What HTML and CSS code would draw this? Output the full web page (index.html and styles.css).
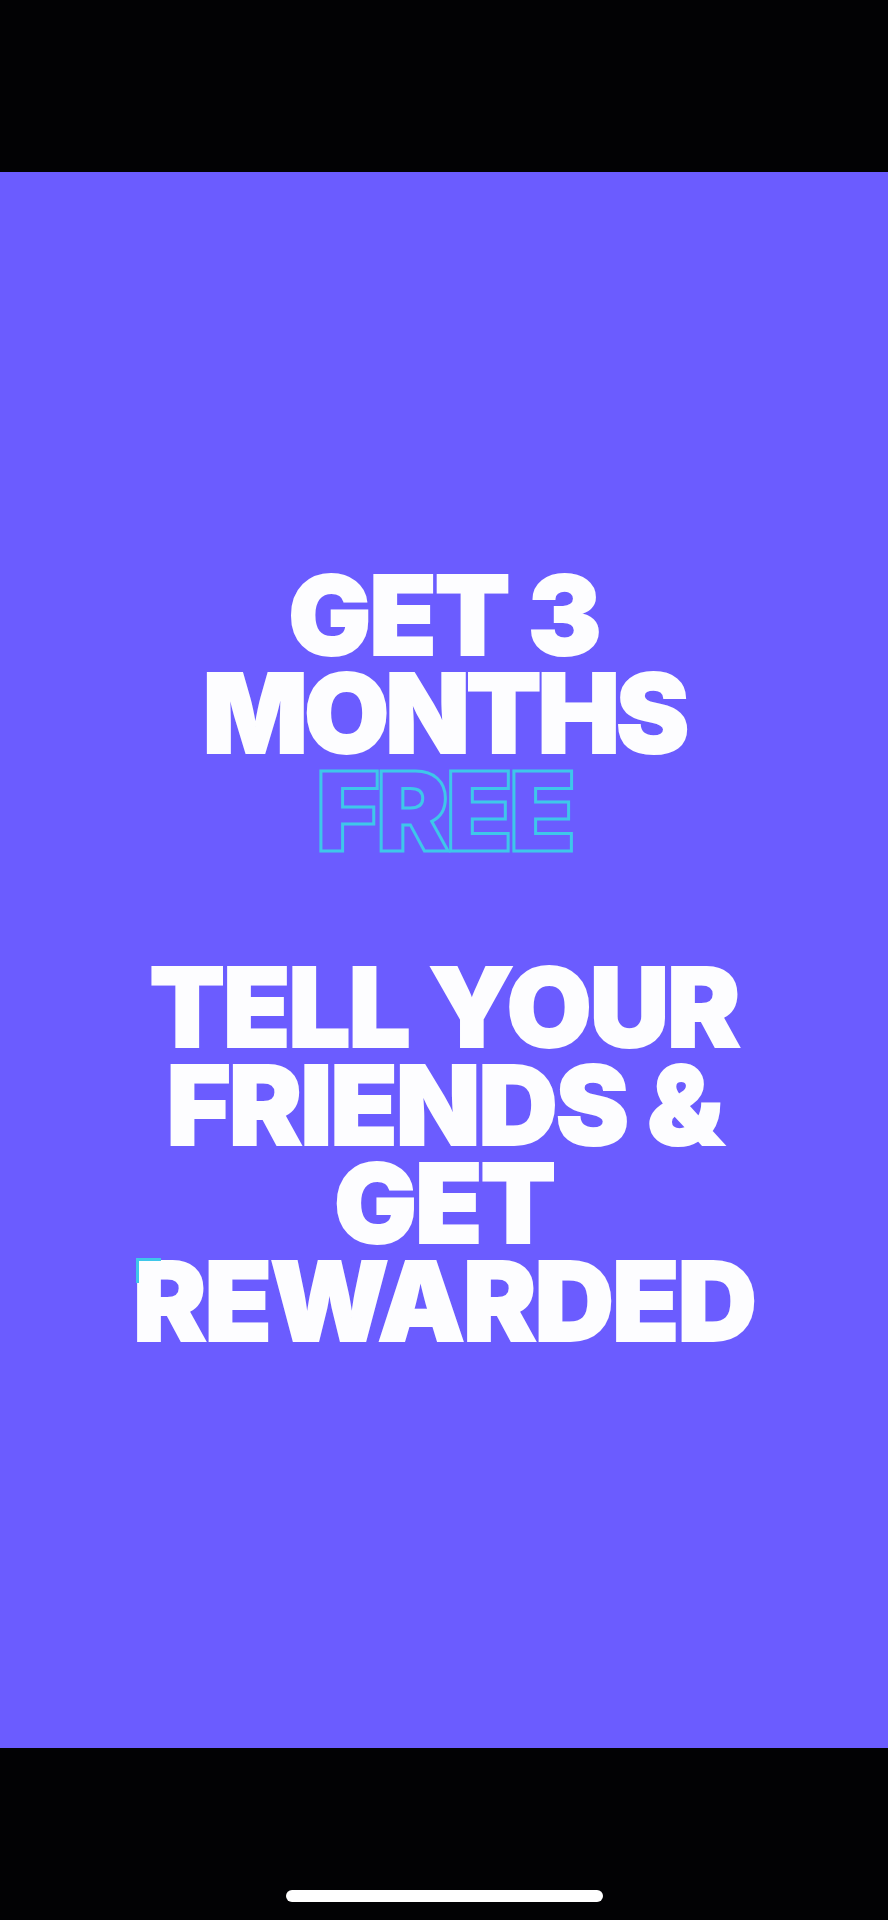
FILE: index.html
```html
<!DOCTYPE html>
<html>
<head>
<meta name="viewport" content="width=device-width, user-scalable=no">
<link rel="stylesheet" href="styles.css">
<title>Get 3 months free</title>
</head>
<body>
	<div class="topbar"></div>
	<div class="promo">
		<h1 class="block">GET 3<br><span class="tight">MONTHS</span><br><span class="free">FREE</span></h1>
		<h2 class="block">TELL YOUR<br>FRIENDS &amp;<br>GET<br><span class="last"><span class="corner"></span>REWARDED</span></h2>
	</div>
	<div class="bottombar">
		<div class="home"></div>
	</div>
</body>
</html>
```

FILE: styles.css
```css
* {
	box-sizing: border-box;
}
html, body {
	margin: 0;
	padding: 0;
	background-color: #020204;
}
body {
	width: 888px;
	height: 1920px;
	font-family: "Inter", "Lato", "Liberation Sans", sans-serif;
}
.topbar {
	height: 172px;
}
.promo {
	height: 1576px;
	background-color: #6b5cff;
	padding-top: 394px;
	display: flex;
	flex-direction: column;
	align-items: center;
	gap: 98px;
}
.block {
	margin: 0;
	color: #fdfdff;
	-webkit-text-stroke: 2px #fdfdff;
	font-size: 110px;
	font-weight: 900;
	line-height: 98px;
	letter-spacing: -2px;
	text-align: center;
	white-space: nowrap;
}
.tight {
	letter-spacing: -4px;
}
.free {
	color: transparent;
	-webkit-text-stroke: 3px #3ec7ea;
	letter-spacing: -4px;
}
.last {
	position: relative;
}
.corner {
	position: absolute;
	left: 3px;
	top: 24px;
	width: 25px;
	height: 25px;
	border-top: 3px solid #3ec7ea;
	border-left: 3px solid #3ec7ea;
}
.bottombar {
	height: 172px;
	display: flex;
	justify-content: center;
	align-items: flex-start;
	padding-top: 142px;
}
.home {
	width: 317px;
	height: 12px;
	border-radius: 6px;
	background-color: #ffffff;
}
```
